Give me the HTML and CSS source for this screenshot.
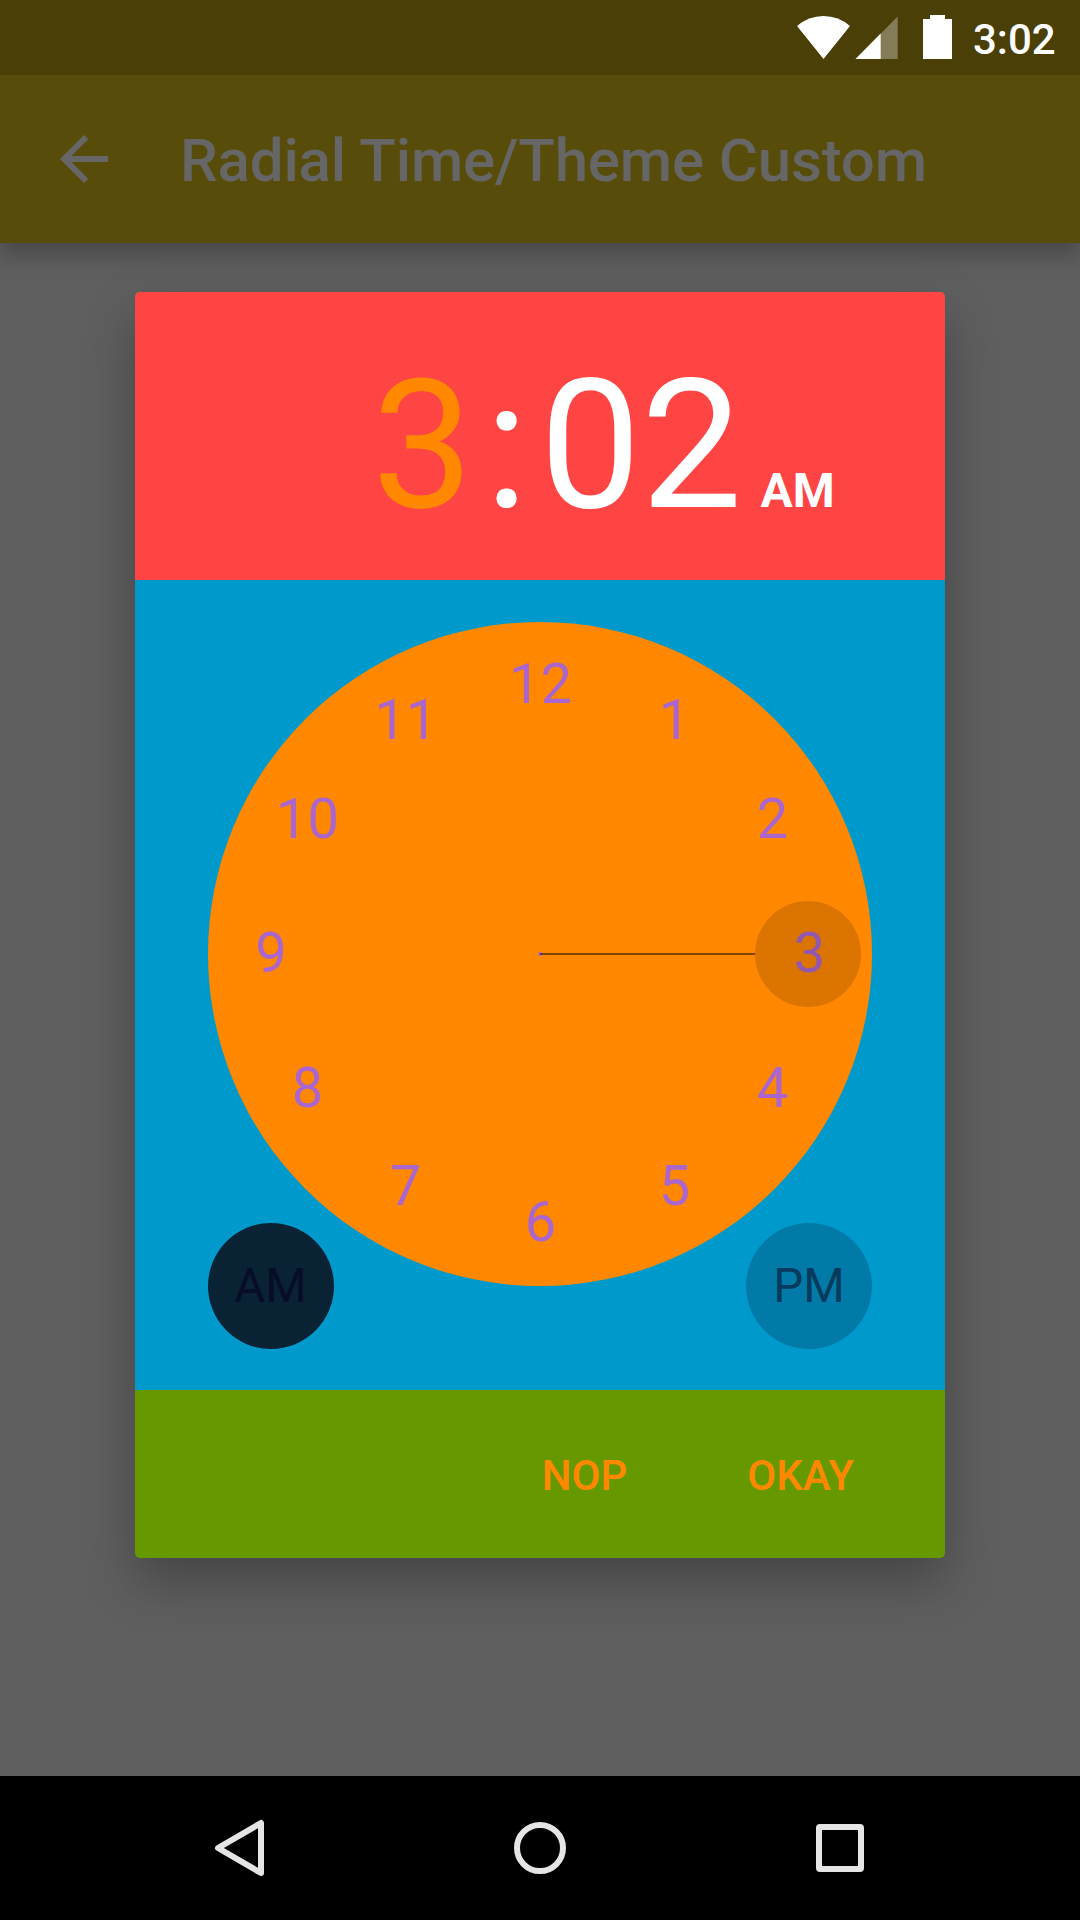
FILE: index.html
```html
<!DOCTYPE html>
<html lang="en">
<head>
<meta charset="utf-8">
<title>Radial Time/Theme Custom</title>
<link rel="stylesheet" href="styles.css">
</head>
<body>
<div class="screen">
  <header class="status-bar">
    <svg class="status-icons" width="160" height="75" viewBox="795 0 160 75" fill="#fff">
      <path d="M797 26Q808.5 16 823.5 16T850 26L823.5 59Z"/>
      <path d="M855.5 59L897.7 16.5V59Z" opacity=".32"/>
      <path d="M855.5 59L880.7 33.6V59Z"/>
      <path d="M930 15H945V19H952V59H923V19H930Z"/>
    </svg>
    <span class="status-time">3:02</span>
  </header>
  <div class="toolbar">
    <svg class="back" width="72" height="72" viewBox="0 0 24 24" fill="#666"><path d="M20 11H7.83l5.59-5.59L12 4l-8 8 8 8 1.41-1.41L7.83 13H20v-2z"/></svg>
    <h1 class="title">Radial Time/Theme Custom</h1>
  </div>
  <main class="content">
    <section class="dialog">
      <div class="time-header">
        <span class="hour">3</span><span class="colon">:</span><span class="minute">02</span><span class="ampm">AM</span>
      </div>
      <svg class="clock" width="810" height="810" viewBox="135 580 810 810">
        <circle cx="540" cy="954" r="332" fill="#ff8800"/>
        <g class="numbers">
          <text x="540.5" y="703">12</text>
          <text x="674.5" y="739">1</text>
          <text x="772.5" y="838">2</text>
          <text x="809.5" y="972">3</text>
          <text x="772.5" y="1107">4</text>
          <text x="674.5" y="1205">5</text>
          <text x="540.5" y="1241">6</text>
          <text x="405.5" y="1205">7</text>
          <text x="307.5" y="1107">8</text>
          <text x="271" y="972">9</text>
          <text x="307.5" y="838">10</text>
          <text x="406" y="739">11</text>
        </g>
        <circle cx="540" cy="954" r="2" fill="#aa66cc"/>
        <path d="M540 954H755" stroke="#000" stroke-opacity=".5" stroke-width="2"/>
        <circle cx="808" cy="954" r="53" fill="#000" fill-opacity=".14"/>
        <circle cx="271" cy="1286" r="63" fill="#092234"/>
        <text class="half half-on" x="270.5" y="1302">AM</text>
        <circle cx="809" cy="1286" r="63" fill="#027aa7"/>
        <text class="half half-off" x="809" y="1302">PM</text>
      </svg>
      <div class="actions">
        <span class="action">NOP</span>
        <span class="action">OKAY</span>
      </div>
    </section>
  </main>
  <nav class="nav-bar">
    <svg width="60" height="60" viewBox="210 1818 60 60"><path d="M261 1823V1873L218 1848Z"/></svg>
    <svg width="60" height="60" viewBox="510 1818 60 60"><circle cx="540" cy="1848" r="23"/></svg>
    <svg width="60" height="60" viewBox="810 1818 60 60"><rect x="819" y="1827" width="42" height="42" rx="1"/></svg>
  </nav>
</div>
</body>
</html>
```
FILE: styles.css
```css
body {
  margin: 0;
  background: #5f5f5f;
  font-family: Roboto, sans-serif;
}
.screen {
  width: 1080px;
  height: 1920px;
  display: flex;
  flex-direction: column;
  overflow: hidden;
}
.status-bar {
  position: relative;
  z-index: 1;
  height: 75px;
  background: #4a3f07;
  display: flex;
  justify-content: flex-end;
  box-sizing: border-box;
  padding-right: 24px;
}
.status-time {
  width: 83px;
  margin-left: 18px;
  color: #fff;
  font-size: 42px;
  font-weight: 500;
  line-height: 80px;
  white-space: nowrap;
}
.toolbar {
  height: 168px;
  background: #574c0a;
  display: flex;
  align-items: center;
  padding-left: 48px;
  box-sizing: border-box;
  box-shadow: 0 10px 24px rgba(0, 0, 0, .28);
}
.title {
  margin: 4px 0 0 60px;
  color: #666;
  font-size: 60px;
  font-weight: 500;
  letter-spacing: -.15px;
  line-height: 72px;
  white-space: nowrap;
}
.content {
  flex: 1;
  padding-top: 49px;
}
.dialog {
  width: 810px;
  margin: 0 auto;
  border-radius: 5px;
  background: #669900;
  box-shadow: 0 24px 52px rgba(0, 0, 0, .28);
}
.time-header {
  height: 288px;
  border-radius: 5px 5px 0 0;
  background: #ff4444;
  color: #fff;
  display: flex;
  align-items: baseline;
  box-sizing: border-box;
  padding: 48px 0 0 237px;
  font-size: 180px;
  line-height: 211px;
}
.hour { color: #ff8800; }
.colon { margin: 0 11.5px; }
.ampm {
  margin-left: 18.5px;
  font-size: 48px;
  font-weight: 700;
}
.clock {
  display: block;
  background: #0099cc;
}
.numbers {
  fill: #aa66cc;
  font-size: 56px;
  text-anchor: middle;
}
.half {
  font-size: 47.5px;
  text-anchor: middle;
}
.half-on { fill: #080d27; }
.half-off { fill: #063b5d; }
.actions {
  height: 168px;
  display: flex;
  justify-content: flex-end;
  align-items: center;
  gap: 120px;
  padding: 4px 91px 0 0;
  box-sizing: border-box;
}
.action {
  color: #ff8800;
  font-size: 42px;
  font-weight: 500;
  line-height: 50px;
}
.nav-bar {
  height: 144px;
  background: #000;
  display: flex;
  justify-content: center;
  align-items: center;
  gap: 240px;
}
.nav-bar svg {
  fill: none;
  stroke: #e5e5e5;
  stroke-width: 6;
  stroke-linejoin: round;
}
```
